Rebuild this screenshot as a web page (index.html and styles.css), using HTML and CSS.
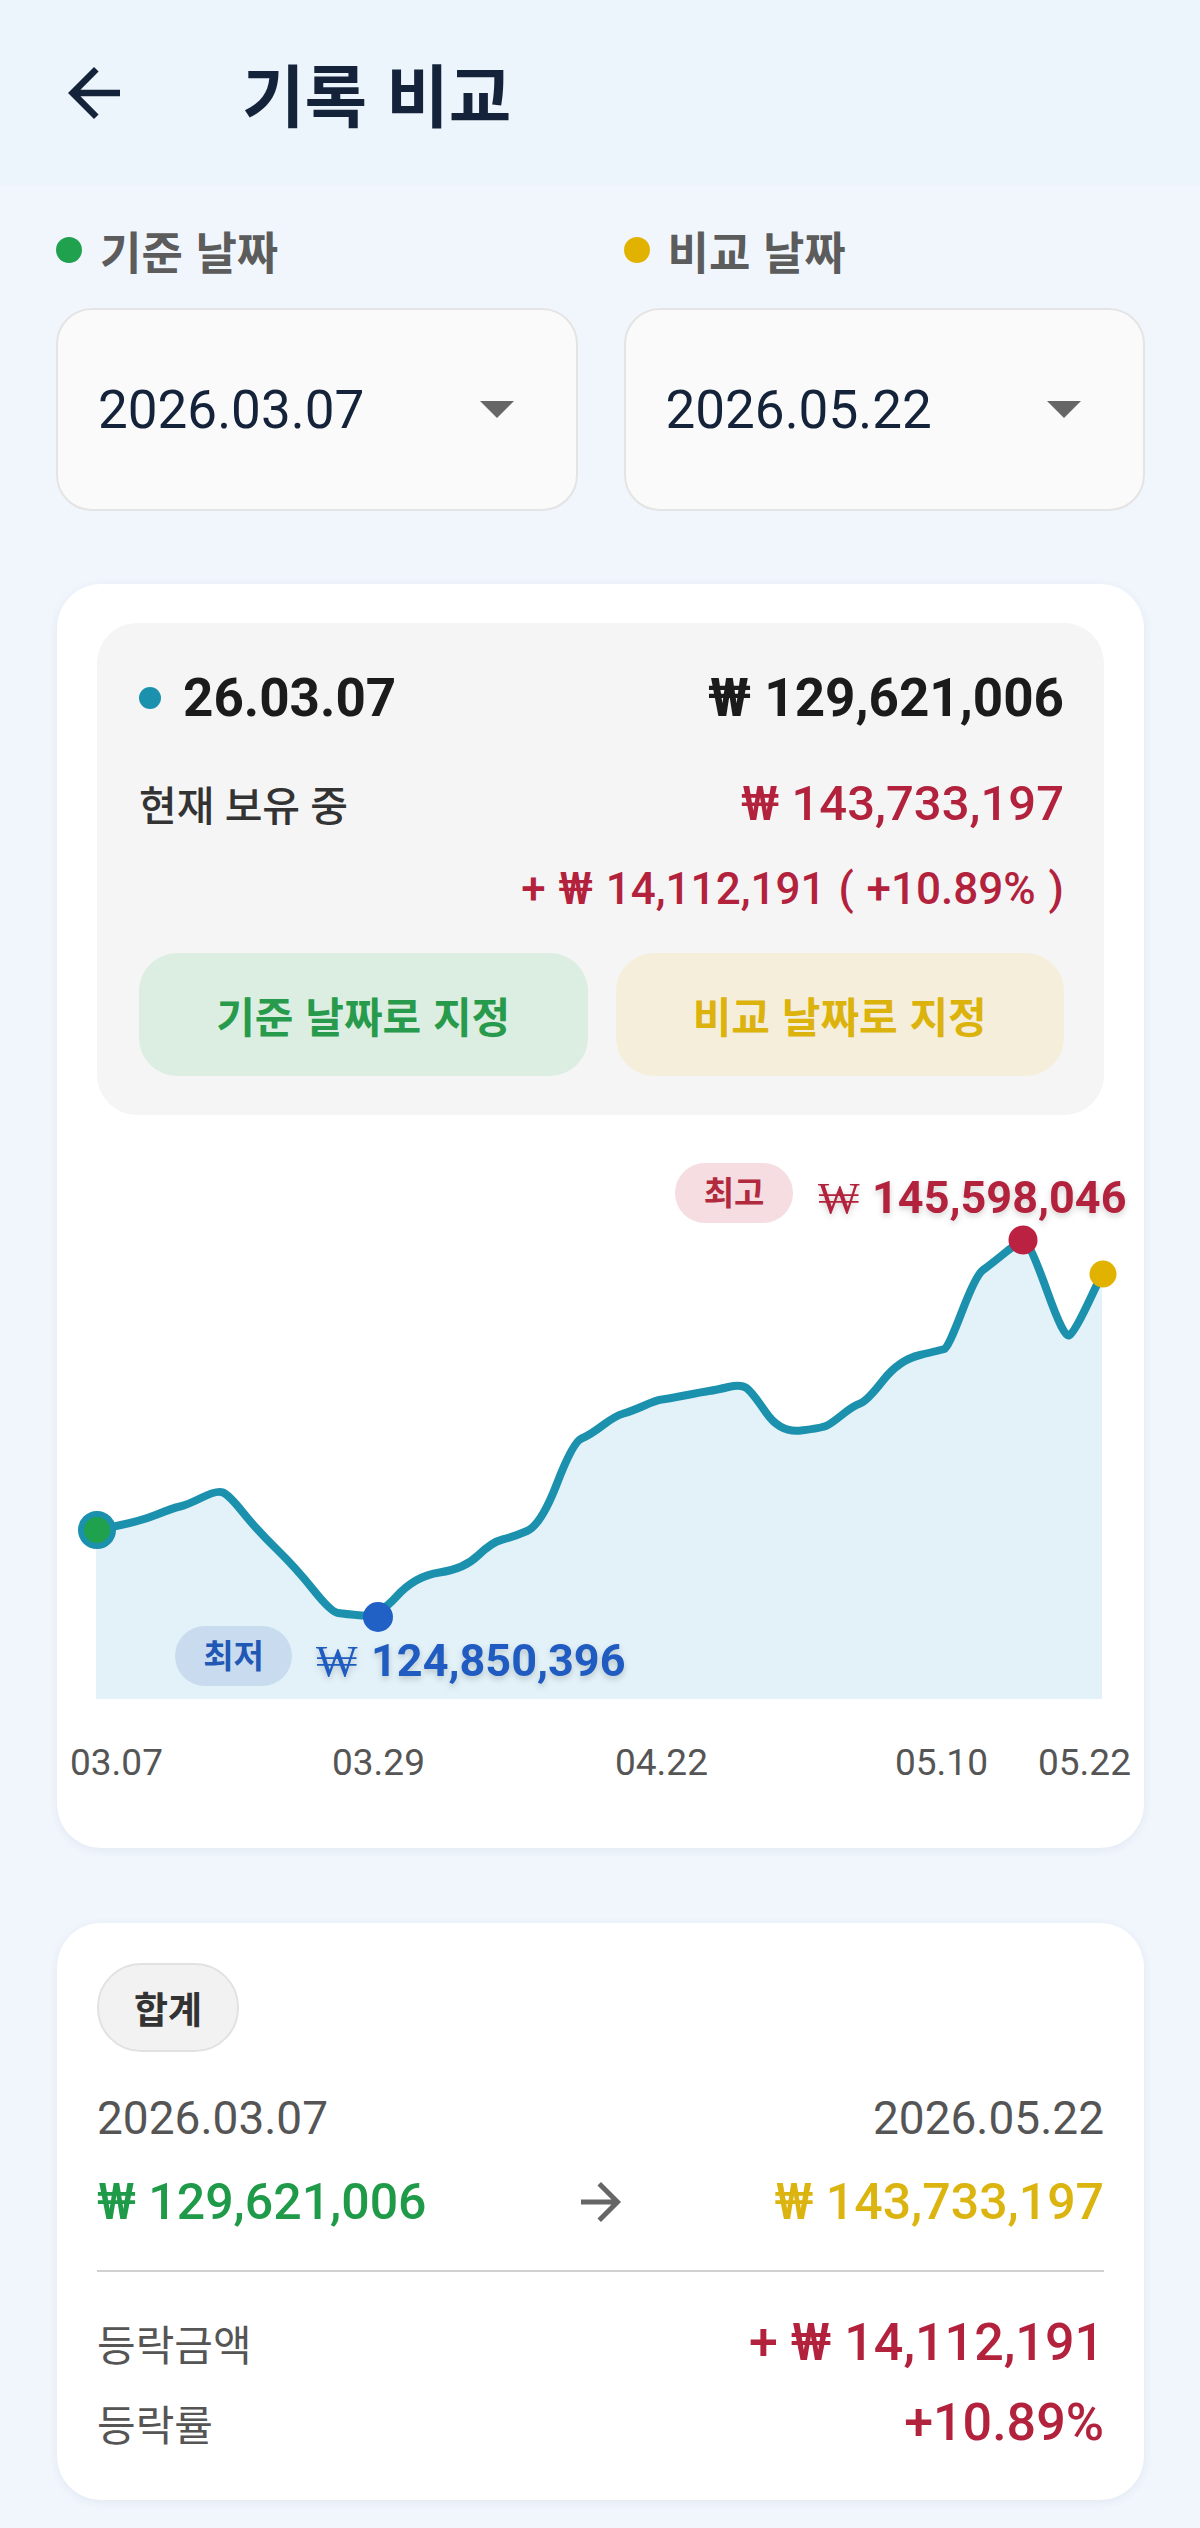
FILE: index.html
```html
<!DOCTYPE html>
<html lang="ko">
<head>
<meta charset="utf-8">
<title>기록 비교</title>
<link rel="stylesheet" href="styles.css">
</head>
<body>
<header class="topbar">
  <svg class="back" viewBox="4 4 16 16" aria-hidden="true"><path d="M20 11H7.83l5.59-5.59L12 4l-8 8 8 8 1.41-1.41L7.83 13H20v-2z"/></svg>
  <h1 class="title">기록 비교</h1>
</header>

<section class="pickers">
  <div class="picker">
    <div class="picker-label"><span class="dot dot-green"></span>기준 날짜</div>
    <div class="select">
      <span class="select-value">2026.03.07</span>
      <svg class="caret" viewBox="0 0 34 17" aria-hidden="true"><path d="M0 0h34L17 17z"/></svg>
    </div>
  </div>
  <div class="picker">
    <div class="picker-label"><span class="dot dot-yellow"></span>비교 날짜</div>
    <div class="select">
      <span class="select-value">2026.05.22</span>
      <svg class="caret" viewBox="0 0 34 17" aria-hidden="true"><path d="M0 0h34L17 17z"/></svg>
    </div>
  </div>
</section>

<section class="card chart-card">
  <div class="panel">
    <div class="prow prow-head">
      <div class="pdate"><span class="dot dot-teal"></span>26.03.07</div>
      <div class="pvalue">₩ 129,621,006</div>
    </div>
    <div class="prow">
      <div class="plabel">현재 보유 중</div>
      <div class="pnow">₩ 143,733,197</div>
    </div>
    <div class="prow prow-diff">
      <div class="pdiff">+ ₩ 14,112,191 ( +10.89% )</div>
    </div>
    <div class="pbuttons">
      <button class="pbtn pbtn-green">기준 날짜로 지정</button>
      <button class="pbtn pbtn-yellow">비교 날짜로 지정</button>
    </div>
  </div>

  <svg class="chart" viewBox="57 1115 1086 733" aria-label="chart">
    <path class="area" d="M96 1530 L118.5 1525.5 Q141 1521 157 1514.5 Q173 1508 180 1506.5 Q187 1505 202 1497.5 Q217 1490 223 1492.5 Q229 1495 243 1512.5 Q257 1530 276.5 1549 Q296 1568 313.5 1590 Q331 1612 338 1613 Q345 1614 361.5 1615.5 Q378 1617 396.5 1596.5 Q415 1576 439.5 1572.5 Q464 1569 478 1555.5 Q492 1542 502.5 1539.5 Q513 1537 527 1531 Q541 1525 557 1483.5 Q573 1442 581.5 1438.5 Q590 1435 602.5 1425.5 Q615 1416 623.5 1413.5 Q632 1411 644.5 1405.5 Q657 1400 662 1399.5 Q667 1399 684.5 1395.5 Q702 1392 709 1391 Q716 1390 728.5 1387 Q741 1384 746.5 1388 Q752 1392 766 1412.5 Q780 1433 801 1430.5 Q822 1428 827 1425.5 Q832 1423 842.5 1414.5 Q853 1406 860 1403.5 Q867 1401 883 1380.5 Q899 1360 920 1355 Q941 1350 944.5 1349 Q948 1348 962 1311.5 Q976 1275 983 1270 Q990 1265 1006 1252 Q1022 1239 1027 1244 Q1032 1249 1048 1293.5 Q1064 1338 1069 1335.5 Q1074 1333 1088 1303.5 L1102 1274 L1102 1699 L96 1699 Z"/>
    <path class="line" d="M96 1530 L118.5 1525.5 Q141 1521 157 1514.5 Q173 1508 180 1506.5 Q187 1505 202 1497.5 Q217 1490 223 1492.5 Q229 1495 243 1512.5 Q257 1530 276.5 1549 Q296 1568 313.5 1590 Q331 1612 338 1613 Q345 1614 361.5 1615.5 Q378 1617 396.5 1596.5 Q415 1576 439.5 1572.5 Q464 1569 478 1555.5 Q492 1542 502.5 1539.5 Q513 1537 527 1531 Q541 1525 557 1483.5 Q573 1442 581.5 1438.5 Q590 1435 602.5 1425.5 Q615 1416 623.5 1413.5 Q632 1411 644.5 1405.5 Q657 1400 662 1399.5 Q667 1399 684.5 1395.5 Q702 1392 709 1391 Q716 1390 728.5 1387 Q741 1384 746.5 1388 Q752 1392 766 1412.5 Q780 1433 801 1430.5 Q822 1428 827 1425.5 Q832 1423 842.5 1414.5 Q853 1406 860 1403.5 Q867 1401 883 1380.5 Q899 1360 920 1355 Q941 1350 944.5 1349 Q948 1348 962 1311.5 Q976 1275 983 1270 Q990 1265 1006 1252 Q1022 1239 1027 1244 Q1032 1249 1048 1293.5 Q1064 1338 1069 1335.5 Q1074 1333 1088 1303.5 L1102 1274"/>

    <circle class="pt-start" cx="97" cy="1530" r="16"/>
    <circle class="pt-min" cx="378" cy="1617" r="15"/>
    <circle class="pt-max" cx="1023" cy="1240" r="14.5"/>
    <circle class="pt-end" cx="1103" cy="1274" r="13.5"/>

    <rect class="pill-max" x="675" y="1163" width="118" height="60" rx="30"/>
    <text class="pill-text pill-text-max" x="734" y="1205" text-anchor="middle">최고</text>
    <text class="val val-max" y="1213"><tspan class="won" x="818">₩</tspan><tspan x="872">145,598,046</tspan></text>

    <rect class="pill-min" x="175" y="1626" width="117" height="60" rx="30"/>
    <text class="pill-text pill-text-min" x="233.5" y="1668" text-anchor="middle">최저</text>
    <text class="val val-min" y="1676"><tspan class="won" x="316">₩</tspan><tspan x="371">124,850,396</tspan></text>

    <text class="axis" x="70" y="1775">03.07</text>
    <text class="axis" x="332" y="1775">03.29</text>
    <text class="axis" x="615" y="1775">04.22</text>
    <text class="axis" x="895" y="1775">05.10</text>
    <text class="axis" x="1038" y="1775">05.22</text>
  </svg>
</section>

<section class="card sum-card">
  <div class="sum-pill">합계</div>
  <div class="srow srow-dates">
    <span>2026.03.07</span>
    <span>2026.05.22</span>
  </div>
  <div class="srow srow-amounts">
    <span class="amt-green">₩ 129,621,006</span>
    <svg class="fwd" viewBox="4 4 16 16" aria-hidden="true"><path d="M12 4l-1.41 1.41L16.17 11H4v2h12.17l-5.58 5.59L12 20l8-8z"/></svg>
    <span class="amt-yellow">₩ 143,733,197</span>
  </div>
  <div class="divider"></div>
  <div class="srow srow-stat">
    <span class="stat-label">등락금액</span>
    <span class="stat-value">+ ₩ 14,112,191</span>
  </div>
  <div class="srow srow-stat srow-stat2">
    <span class="stat-label">등락률</span>
    <span class="stat-value">+10.89%</span>
  </div>
</section>
</body>
</html>
```

FILE: styles.css
```css
* { box-sizing: border-box; }

html, body {
  margin: 0;
  padding: 0;
}

body {
  width: 1200px;
  min-height: 2528px;
  background: #f1f6fd;
  font-family: Roboto, "Noto Sans CJK KR", "Noto Sans", sans-serif;
  color: #1b1b1b;
}

/* ---------- top bar ---------- */
.topbar {
  height: 185px;
  background: #ecf4fc;
  display: flex;
  align-items: center;
  padding-left: 68px;
}

.back {
  width: 52px;
  height: 52px;
  fill: #14233a;
  flex: none;
}

.title {
  margin: 0 0 0 122px;
  font-size: 68px;
  font-weight: 700;
  line-height: 1;
  color: #14233a;
  font-family: "Noto Sans CJK KR", sans-serif;
}

/* ---------- date pickers ---------- */
.pickers {
  display: grid;
  grid-template-columns: 1fr 1fr;
  column-gap: 46px;
  padding: 35px 55px 0 56px;
}

.picker-label {
  height: 60px;
  display: flex;
  align-items: center;
  gap: 18px;
  font-family: "Noto Sans CJK KR", sans-serif;
  font-size: 45px;
  font-weight: 700;
  color: #5c5c5c;
}

.dot {
  display: inline-block;
  border-radius: 50%;
  flex: none;
}

.picker-label .dot {
  width: 26px;
  height: 26px;
}

.dot-green { background: #1fa14e; }
.dot-yellow { background: #e2b200; }
.dot-teal { background: #1b91ad; }

.select {
  margin-top: 28px;
  height: 203px;
  border: 2px solid #e4e4e4;
  border-radius: 36px;
  background: #fafafa;
  display: flex;
  align-items: center;
  justify-content: space-between;
  padding: 0 62px 0 40px;
}

.select-value {
  font-size: 53px;
  color: #14233a;
}

.caret {
  width: 34px;
  height: 17px;
  fill: #666666;
}

/* ---------- cards ---------- */
.card {
  background: #ffffff;
  border-radius: 44px;
  box-shadow: 0 2px 10px rgba(40, 60, 90, 0.07);
  margin: 0 56px 0 57px;
}

.chart-card {
  margin-top: 73px;
  padding: 39px 40px 0;
}

.panel {
  background: #f5f5f5;
  border-radius: 40px;
  padding: 25px 40px 39px 42px;
}

.prow {
  display: flex;
  align-items: center;
  justify-content: space-between;
  height: 86px;
}

.prow-head {
  height: 100px;
  margin-bottom: 12px;
}

.prow-diff {
  justify-content: flex-end;
}

.pdate {
  display: flex;
  align-items: center;
  gap: 22px;
  font-size: 53px;
  font-weight: 700;
  color: #1b1b1b;
}

.pdate .dot {
  width: 22px;
  height: 22px;
}

.pvalue {
  font-size: 53px;
  font-weight: 700;
  color: #1b1b1b;
}

.plabel {
  font-size: 41px;
  font-weight: 500;
  color: #333333;
}

.pnow {
  font-size: 49px;
  font-weight: 500;
  color: #b3223d;
}

.pdiff {
  font-size: 44px;
  font-weight: 500;
  color: #b3223d;
  word-spacing: 2px;
}

.pbuttons {
  margin-top: 21px;
  display: grid;
  grid-template-columns: 1fr 1fr;
  column-gap: 28px;
}

.pbtn {
  height: 123px;
  border: none;
  border-radius: 38px;
  font-family: "Noto Sans CJK KR", sans-serif;
  font-size: 42px;
  font-weight: 700;
  padding: 0;
}

.pbtn-green {
  background: #dcede2;
  color: #279b4b;
}

.pbtn-yellow {
  background: #f5eedb;
  color: #dcb20c;
}

/* ---------- chart ---------- */
.chart {
  display: block;
  width: 1086px;
  height: 733px;
  margin: 0 -40px;
  overflow: visible;
}

.area {
  fill: #e2f2f8;
}

.line {
  fill: none;
  stroke: #1b91ad;
  stroke-width: 8;
  stroke-linejoin: round;
  stroke-linecap: round;
}

.pt-start { fill: #1fa14e; stroke: #1b91ad; stroke-width: 6; }
.pt-min { fill: #2160c4; }
.pt-max { fill: #bb2140; }
.pt-end { fill: #e2b200; }

.pill-max { fill: #f5dde2; }
.pill-min { fill: #c9dcef; }

.pill-text {
  font-family: "Noto Sans CJK KR", sans-serif;
  font-size: 33px;
  font-weight: 700;
}

.pill-text-max { fill: #b22a3e; }
.pill-text-min { fill: #2158b5; }

.val {
  font-size: 45px;
  font-weight: 700;
  filter: drop-shadow(0 3px 3px rgba(0, 0, 0, 0.18));
}

.val .won {
  font-family: "DejaVu Serif", "Liberation Serif", serif;
  font-weight: 400;
  font-size: 44px;
}

.val-max { fill: #b3223d; }
.val-min { fill: #1f5bc0; }

.axis {
  font-size: 37px;
  fill: #555555;
}

/* ---------- summary card ---------- */
.sum-card {
  margin-top: 75px;
  padding: 40px 40px 48px;
}

.sum-pill {
  width: 142px;
  height: 89px;
  border-radius: 44px;
  background: #f2f2f2;
  border: 2px solid #e2e2e2;
  display: flex;
  align-items: center;
  justify-content: center;
  font-family: "Noto Sans CJK KR", sans-serif;
  font-size: 37px;
  font-weight: 700;
  color: #333333;
}

.srow {
  display: flex;
  align-items: center;
  justify-content: space-between;
  height: 60px;
}

.srow-dates {
  margin-top: 36px;
  font-size: 46px;
  color: #555555;
}

.srow-amounts {
  margin-top: 24px;
  display: grid;
  grid-template-columns: 1fr auto 1fr;
  align-items: center;
  font-size: 50px;
  font-weight: 500;
}

.amt-green { color: #1f9a48; justify-self: start; }
.amt-yellow { color: #dcb40f; justify-self: end; }

.fwd {
  width: 40px;
  height: 40px;
  fill: #666666;
}

.divider {
  margin-top: 38px;
  height: 2px;
  background: #d0d0d0;
}

.srow-stat {
  margin-top: 40px;
}

.srow-stat2 {
  margin-top: 20px;
}

.stat-label {
  font-size: 42px;
  color: #555555;
}

.stat-value {
  font-size: 52px;
  font-weight: 500;
  color: #b3223d;
}
```
